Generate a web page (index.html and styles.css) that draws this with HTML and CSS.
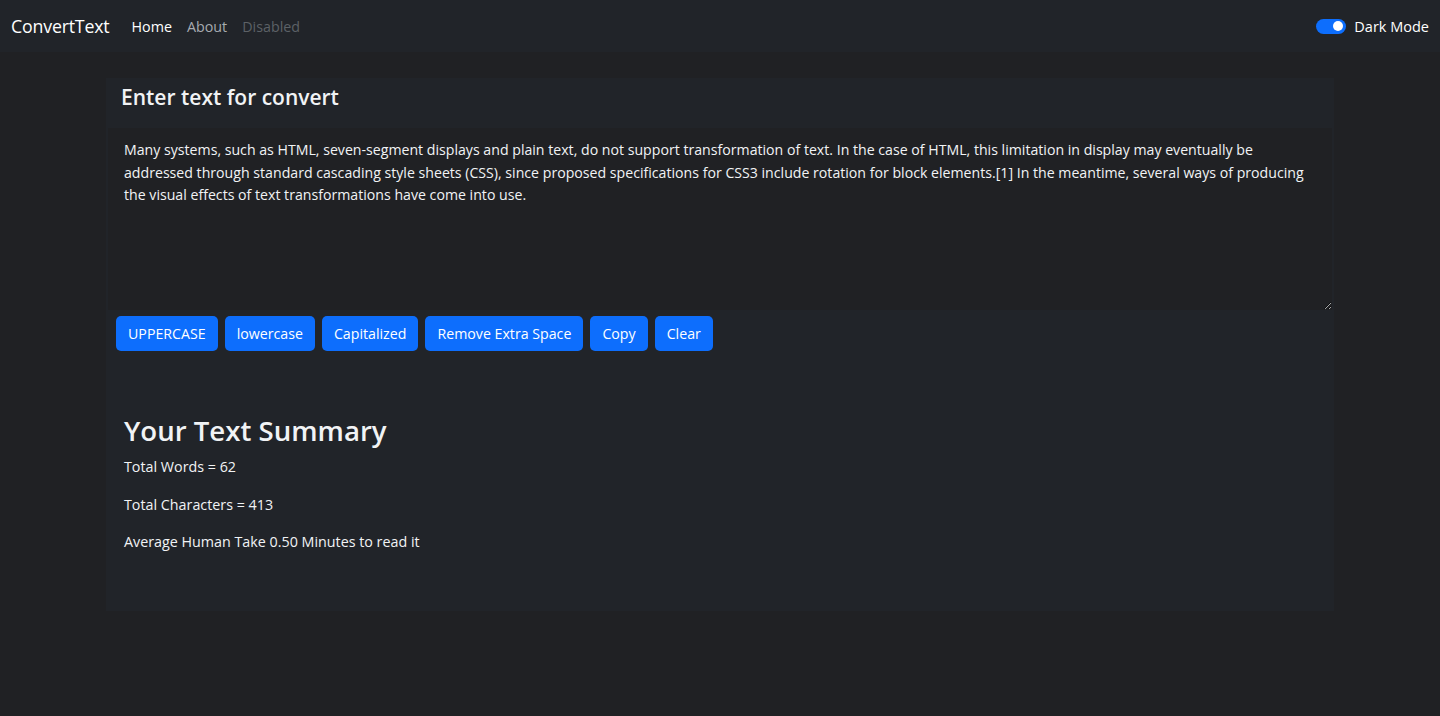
FILE: index.html
```html
<!DOCTYPE html>
<html lang="en">
<head>
<meta charset="utf-8">
<title>ConvertText</title>
<link rel="stylesheet" href="styles.css">
</head>
<body>
<nav class="navbar">
  <div class="nav-left">
    <a class="brand" href="#">ConvertText</a>
    <ul class="nav-links">
      <li><a class="active" href="#">Home</a></li>
      <li><a href="#">About</a></li>
      <li><span class="disabled">Disabled</span></li>
    </ul>
  </div>
  <label class="switch">
    <span class="track"><span class="knob"></span></span>
    <span class="switch-label">Dark Mode</span>
  </label>
</nav>
<main class="container">
  <section class="editor">
    <h1 class="title">Enter text for convert</h1>
    <textarea class="text-box" rows="8">Many systems, such as HTML, seven-segment displays and plain text, do not support transformation of text. In the case of HTML, this limitation in display may eventually be addressed through standard cascading style sheets (CSS), since proposed specifications for CSS3 include rotation for block elements.[1] In the meantime, several ways of producing the visual effects of text transformations have come into use.</textarea>
    <div class="actions">
      <button class="btn">UPPERCASE</button>
      <button class="btn">lowercase</button>
      <button class="btn">Capitalized</button>
      <button class="btn">Remove Extra Space</button>
      <button class="btn">Copy</button>
      <button class="btn">Clear</button>
    </div>
  </section>
  <section class="summary">
    <h2 class="summary-title">Your Text Summary</h2>
    <p>Total Words = 62</p>
    <p>Total Characters = 413</p>
    <p>Average Human Take 0.50 Minutes to read it</p>
  </section>
</main>
</body>
</html>
```

FILE: styles.css
```css
* { box-sizing: border-box; }
html, body {
  margin: 0;
  background: #202124;
  color: #f1f3f5;
  font-family: "Open Sans", "Noto Sans", sans-serif;
  font-size: 15px;
}
.navbar {
  display: flex;
  justify-content: space-between;
  align-items: center;
  height: 52px;
  padding: 0 11px;
  background: #212429;
}
.nav-left { display: flex; align-items: center; }
.brand {
  color: #fff;
  text-decoration: none;
  font-size: 17.8px;
  margin-right: 22px;
  letter-spacing: -0.2px;
}
.nav-links {
  display: flex;
  list-style: none;
  margin: 0;
  padding: 0;
  gap: 15px;
}
.nav-links a, .nav-links span {
  text-decoration: none;
  color: #a6abb0;
  font-size: 14.3px;
}
.nav-links a.active { color: #fff; }
.nav-links .disabled { color: #5c6166; }
.switch {
  display: flex;
  align-items: center;
  gap: 8px;
}
.track {
  width: 30px;
  height: 15px;
  border-radius: 8px;
  background: #0d6efd;
  display: flex;
  align-items: center;
  justify-content: flex-end;
  padding-right: 3px;
}
.knob {
  width: 10px;
  height: 10px;
  border-radius: 50%;
  background: #fff;
}
.switch-label { font-size: 14.5px; color: #fff; }
.container {
  width: 1228px;
  margin: 26px 0 0 106px;
  background: #212429;
  padding: 2px 2px 42px 2px;
}
.title {
  margin: 0 0 0 13px;
  font-size: 21px;
  font-weight: 600;
  height: 48px;
  line-height: 34px;
}
.text-box {
  display: block;
  width: 1224px;
  height: 182px;
  background: #202124;
  color: #f1f3f5;
  border: none;
  font-family: inherit;
  font-size: 14.15px;
  line-height: 22.5px;
  padding: 11px 12px 9px 16px;
  resize: vertical;
  outline: none;
}
.actions {
  display: flex;
  gap: 7px;
  padding: 6px 8px 0;
}
.btn {
  background: #0d6efd;
  color: #fff;
  border: none;
  border-radius: 5px;
  height: 35px;
  padding: 0 12px;
  font-family: inherit;
  font-size: 14.2px;
}
.summary { padding: 60px 0 0 16px; }
.summary-title {
  margin: 0 0 7px;
  font-size: 27.6px;
  font-weight: 600;
  line-height: 38px;
}
.summary p {
  margin: 0 0 15px;
  font-size: 14.3px;
  line-height: 22.5px;
}
```
